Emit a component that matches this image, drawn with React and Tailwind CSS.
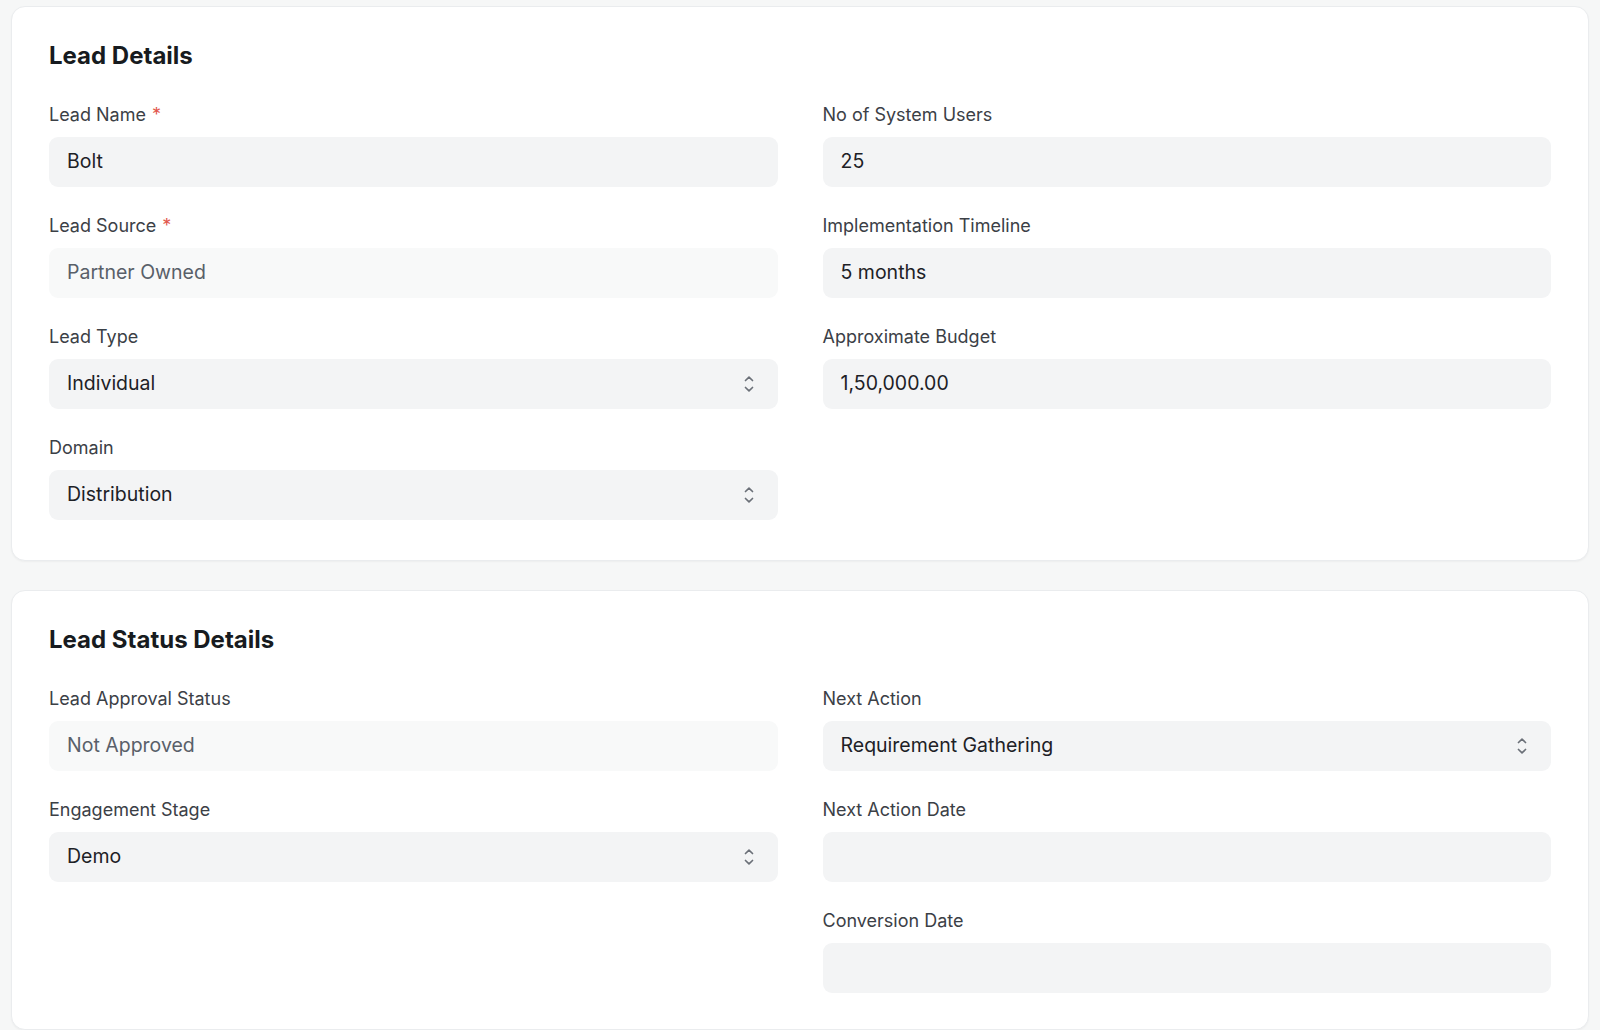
const leadDetails = {
  left: [
    { label: 'Lead Name', value: 'Bolt', required: true },
    { label: 'Lead Source', value: 'Partner Owned', required: true, readOnly: true },
    { label: 'Lead Type', value: 'Individual', select: true },
    { label: 'Domain', value: 'Distribution', select: true },
  ],
  right: [
    { label: 'No of System Users', value: '25' },
    { label: 'Implementation Timeline', value: '5 months' },
    { label: 'Approximate Budget', value: '1,50,000.00' },
  ],
}

const statusDetails = {
  left: [
    { label: 'Lead Approval Status', value: 'Not Approved', readOnly: true },
    { label: 'Engagement Stage', value: 'Demo', select: true },
  ],
  right: [
    { label: 'Next Action', value: 'Requirement Gathering', select: true },
    { label: 'Next Action Date', value: '' },
    { label: 'Conversion Date', value: '' },
  ],
}

function UpDown() {
  return (
    <svg width="10" height="16" viewBox="0 0 10 16" fill="none" stroke="#6b7078" strokeWidth="1.7" strokeLinecap="round" strokeLinejoin="round">
      <path d="M1.5 4.5 L5 1.2 L8.5 4.5" />
      <path d="M1.5 11.5 L5 14.8 L8.5 11.5" />
    </svg>
  )
}

function Field({ label, value, required, readOnly, select }) {
  return (
    <div className="flex flex-col">
      <label className="text-[18px] leading-6 text-[#3b4046] mb-[10px]">
        {label}
        {required && <span className="text-[#e2574c] ml-[6px]">*</span>}
      </label>
      <div
        className={`h-[50px] rounded-[9px] flex items-center justify-between pl-[18px] pr-[24px] text-[19.5px] ${
          readOnly ? 'bg-[#f8f9f9] text-[#596069]' : 'bg-[#f3f4f5] text-[#1d2126]'
        }`}
      >
        <span>{value}</span>
        {select && <UpDown />}
      </div>
    </div>
  )
}

function Section({ title, data, className }) {
  return (
    <div className={`bg-white rounded-[14px] border border-[#eaecee] shadow-[0_1px_2px_rgba(0,0,0,0.04)] px-[37px] ${className}`}>
      <h2 className="text-[24px] leading-7 font-bold text-[#171b20]">{title}</h2>
      <div className="grid grid-cols-2 gap-x-[45px] mt-[33px]">
        <div className="flex flex-col gap-[27px]">
          {data.left.map(f => <Field key={f.label} {...f} />)}
        </div>
        <div className="flex flex-col gap-[27px]">
          {data.right.map(f => <Field key={f.label} {...f} />)}
        </div>
      </div>
    </div>
  )
}

export default function App() {
  return (
    <div className="min-h-screen h-[1030px] overflow-hidden bg-[#f6f7f7] px-[11px] pt-[6px] flex flex-col gap-[29px] font-['Inter',sans-serif]">
      <Section title="Lead Details" data={leadDetails} className="pt-[35px] pb-[40px]" />
      <Section title="Lead Status Details" data={statusDetails} className="pt-[35px] pb-[36px]" />
    </div>
  )
}
